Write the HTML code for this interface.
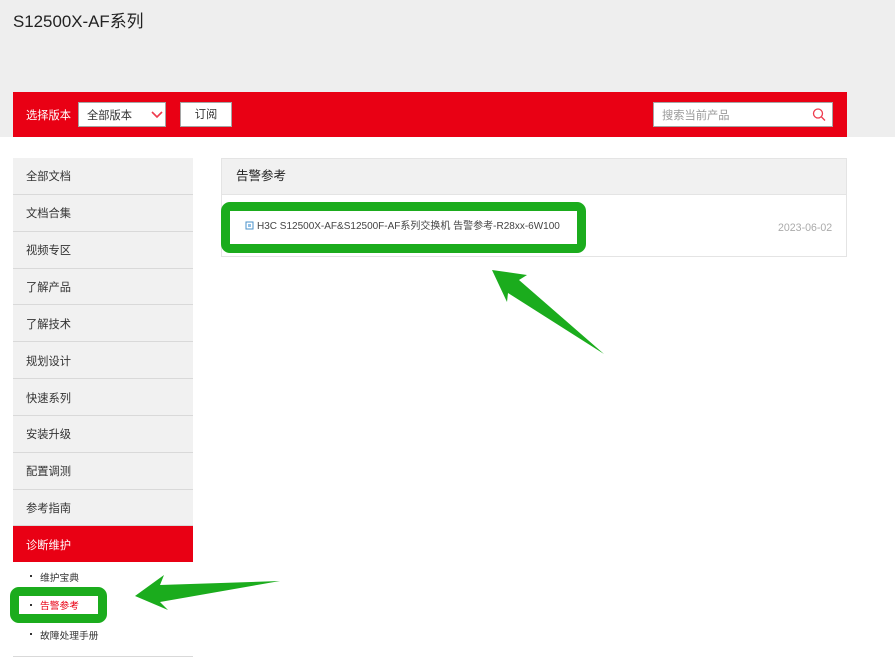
<!DOCTYPE html>
<html lang="zh-CN">
<head>
<meta charset="utf-8">
<title>S12500X-AF系列</title>
<style>
html,body{margin:0;padding:0;background:#fff;}
body{width:895px;height:658px;position:relative;overflow:hidden;font-family:"Liberation Sans","Noto Sans CJK SC",sans-serif;color:#333;}
.a{position:absolute;white-space:nowrap;}
.side{position:absolute;left:13px;width:180px;background:#f1f1f1;border-bottom:1px solid #d9d9d9;box-sizing:border-box;font-size:11.25px;color:#333;padding-left:13px;}
.sub{position:absolute;left:40px;font-size:9.75px;line-height:16px;color:#333;white-space:nowrap;}
.dot{position:absolute;left:30px;width:2px;height:2px;background:#333;}
</style>
</head>
<body>
<div class="a" style="left:0;top:0;width:895px;height:137px;background:#eee;"></div>
<div class="a" style="left:13px;top:11px;font-size:16.900px;line-height:22px;color:#222;">S12500X-AF系列</div>

<div class="a" style="left:13px;top:92px;width:834px;height:45px;background:#e90014;"></div>
<div class="a" style="left:26px;top:108px;font-size:11.25px;line-height:16px;color:#fff;">选择版本</div>
<div class="a" style="left:78px;top:102px;width:88px;height:25px;box-sizing:border-box;background:#fff;border:1px solid #a5a5a5;"></div>
<div class="a" style="left:87px;top:108px;font-size:11.25px;line-height:16px;color:#333;">全部版本</div>
<svg class="a" style="left:150px;top:110px;" width="16" height="10" viewBox="0 0 16 10"><path d="M2 2 L7 7 L12 2" fill="none" stroke="#ee3a4c" stroke-width="1.6"/></svg>
<div class="a" style="left:180px;top:102px;width:52px;height:25px;box-sizing:border-box;background:#fff;border:1px solid #a5a5a5;font-size:11.25px;line-height:25px;text-align:center;color:#333;">订阅</div>

<div class="a" style="left:653px;top:102px;width:180px;height:25px;box-sizing:border-box;background:#fff;border:1px solid #a5a5a5;"></div>
<div class="a" style="left:662px;top:108px;font-size:11.25px;line-height:16px;color:#999;">搜索当前产品</div>
<svg class="a" style="left:811px;top:107px;" width="16" height="16" viewBox="0 0 16 16"><circle cx="7" cy="6.500" r="4.500" fill="none" stroke="#ee3a4c" stroke-width="1.300"/><path d="M10.500 10 L14 13.500" stroke="#ee3a4c" stroke-width="1.300"/></svg>

<div class="side" style="top:158px;height:37px;line-height:39px;">全部文档</div>
<div class="side" style="top:195px;height:37px;line-height:39px;">文档合集</div>
<div class="side" style="top:232px;height:37px;line-height:39px;">视频专区</div>
<div class="side" style="top:269px;height:36px;line-height:38px;">了解产品</div>
<div class="side" style="top:305px;height:37px;line-height:41px;">了解技术</div>
<div class="side" style="top:342px;height:37px;line-height:41px;">规划设计</div>
<div class="side" style="top:379px;height:37px;line-height:41px;">快速系列</div>
<div class="side" style="top:416px;height:37px;line-height:39px;">安装升级</div>
<div class="side" style="top:453px;height:37px;line-height:39px;">配置调测</div>
<div class="side" style="top:490px;height:36px;line-height:39px;">参考指南</div>
<div class="side" style="top:526px;height:36px;line-height:40px;background:#e90014;color:#fff;border:0;">诊断维护</div>

<div class="dot" style="top:575px;"></div>
<div class="sub" style="top:571px;">维护宝典</div>
<div class="a" style="left:10px;top:587px;width:97px;height:36px;box-sizing:border-box;border:9px solid #1bac1d;border-radius:9px;"></div>
<div class="dot" style="top:604px;"></div>
<div class="sub" style="top:599px;color:#e90014;">告警参考</div>
<div class="dot" style="top:633px;"></div>
<div class="sub" style="top:629px;">故障处理手册</div>
<div class="a" style="left:13px;top:656px;width:180px;height:1px;background:#d9d9d9;"></div>

<div class="a" style="left:221px;top:158px;width:626px;height:99px;box-sizing:border-box;border:1px solid #e4e4e4;background:#fff;"></div>
<div class="a" style="left:222px;top:159px;width:624px;height:36px;box-sizing:border-box;background:#f1f1f1;border-bottom:1px solid #e4e4e4;"></div>
<div class="a" style="left:236px;top:167px;font-size:12.500px;line-height:18px;color:#222;">告警参考</div>

<div class="a" style="left:221px;top:202px;width:365px;height:51px;box-sizing:border-box;border:9px solid #1bac1d;border-radius:9px;"></div>
<svg class="a" style="left:245px;top:221px;" width="10" height="10" viewBox="0 0 10 10"><rect x="1" y="1" width="7" height="7" fill="#fff" stroke="#4a90c8" stroke-width="1"/><rect x="3" y="3" width="3" height="3" fill="#8fc0e8"/></svg>
<div class="a" style="left:257px;top:219px;font-size:10px;line-height:16px;color:#444;">H3C S12500X-AF&amp;S12500F-AF系列交换机 告警参考-R28xx-6W100</div>
<div class="a" style="left:778px;top:220px;font-size:10.600px;line-height:16px;color:#aaa;">2023-06-02</div>

<svg class="a" style="left:0;top:0;" width="895" height="658" viewBox="0 0 895 658">
<polygon fill="#1bac1d" points="492,270 527,275 519,280 604,354 508,293 507,302"/>
<polygon fill="#1bac1d" points="135,596 164,575 160,585 280,581 160,602 168,610"/>
</svg>
</body>
</html>
